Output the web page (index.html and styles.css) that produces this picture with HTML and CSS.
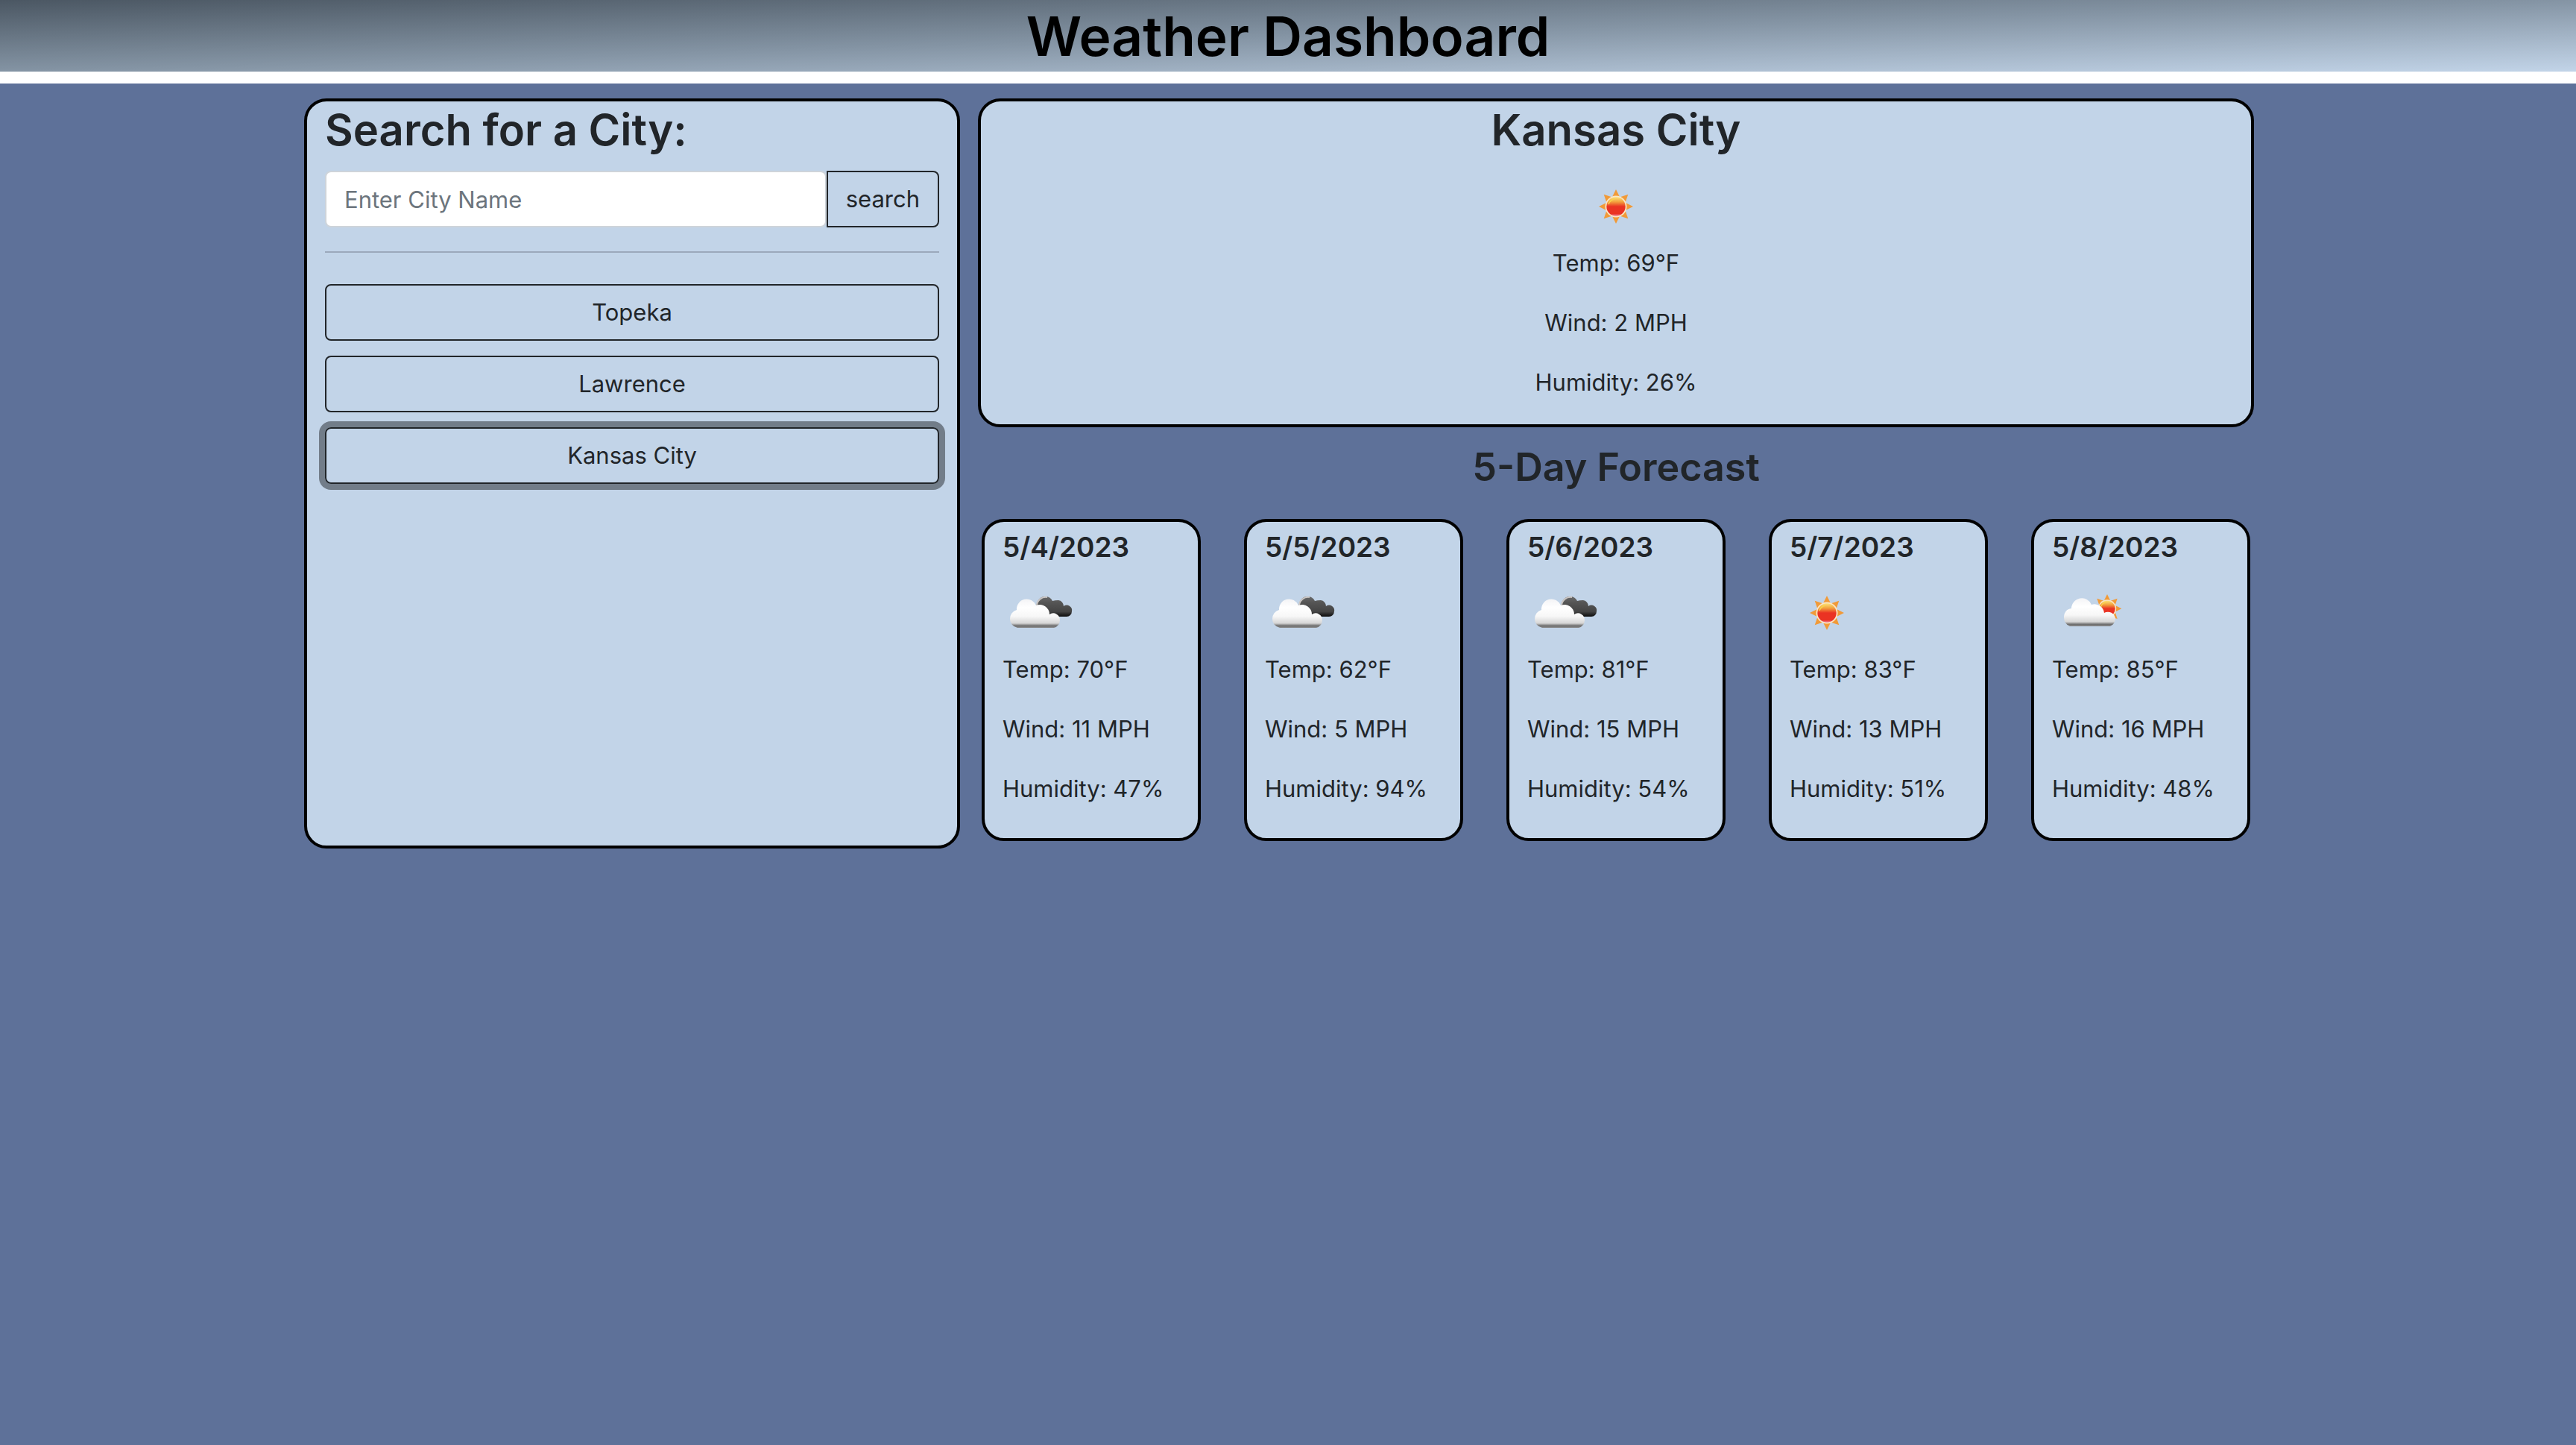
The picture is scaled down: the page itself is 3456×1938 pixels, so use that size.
FILE: index.html
```html
<!DOCTYPE html>
<html lang="en">
<head>
<meta charset="utf-8">
<meta name="viewport" content="width=device-width, initial-scale=1">
<title>Weather Dashboard</title>
<link rel="stylesheet" href="styles.css">
</head>
<body>
<svg class="defs" aria-hidden="true">
  <defs>
    <linearGradient id="disc" x1="0" y1="0" x2="0" y2="1">
      <stop offset="0" stop-color="#fbe27a"/>
      <stop offset=".25" stop-color="#f3a23e"/>
      <stop offset=".5" stop-color="#ea3323"/>
      <stop offset=".88" stop-color="#ea3323"/>
      <stop offset="1" stop-color="#f0809a"/>
    </linearGradient>
    <linearGradient id="white-cloud" x1="0" y1="0" x2="0" y2="1">
      <stop offset="0" stop-color="#f4f4f6"/>
      <stop offset=".3" stop-color="#ffffff"/>
      <stop offset=".6" stop-color="#f7f7f7"/>
      <stop offset=".84" stop-color="#d6d6d6"/>
      <stop offset=".93" stop-color="#6e6e6e"/>
      <stop offset="1" stop-color="#8b8b8b"/>
    </linearGradient>
    <linearGradient id="dark-cloud" x1="0" y1="0" x2="0" y2="1">
      <stop offset="0" stop-color="#6a6a6a"/>
      <stop offset=".3" stop-color="#555555"/>
      <stop offset=".75" stop-color="#444444"/>
      <stop offset="1" stop-color="#0c0c0c"/>
    </linearGradient>
    <symbol id="sun" viewBox="-50 -48 100 100">
      <g fill="#f19a38">
        <path id="ray" d="M0-23L5-13H-5Z"/>
        <use href="#ray" transform="rotate(45)"/>
        <use href="#ray" transform="rotate(90)"/>
        <use href="#ray" transform="rotate(135)"/>
        <use href="#ray" transform="rotate(180)"/>
        <use href="#ray" transform="rotate(225)"/>
        <use href="#ray" transform="rotate(270)"/>
        <use href="#ray" transform="rotate(315)"/>
      </g>
      <circle r="14.5" fill="#fbe6c4"/>
      <circle r="12.7" fill="url(#disc)"/>
      <path d="M-10-3A10.5 10.5 0 0 1-2-10" fill="none" stroke="#f9d34a" stroke-width="1.5"/>
    </symbol>
    <symbol id="broken-clouds" viewBox="0 0 100 100">
      <path fill="url(#dark-cloud)" d="M52 53C46 50 43 42 47 33A11 11 0 0 1 67 32Q70 31 75 31A8 8 0 0 1 82 39A7 7 0 0 1 93 46A7 7 0 0 1 86 53Z"/>
      <path d="M46 38A12 12 0 0 1 60 27" fill="none" stroke="#c8c4c2" stroke-width="2"/>
      <path fill="url(#white-cloud)" d="M20 68A12 12 0 0 1 10 56A12 12 0 0 1 19 44A13.5 13.5 0 0 1 45 38A13 13 0 0 1 63 50A9 9 0 0 1 77 58A11 11 0 0 1 69 68Z"/>
    </symbol>
    <symbol id="few-clouds" viewBox="0 0 100 100">
      <use href="#sun" x="32" y="2" width="84" height="84"/>
      <path fill="url(#white-cloud)" d="M24 66A13 13 0 0 1 16 54A11 11 0 0 1 26 42A14 14 0 0 1 53 37A13 13 0 0 1 70 48A10 10 0 0 1 85 56A12 12 0 0 1 78 66Z"/>
    </symbol>
  </defs>
</svg>

<header class="banner">
  <h1 class="banner-title">Weather Dashboard</h1>
</header>

<main class="page">
  <div class="container">
    <aside class="panel search-panel">
      <h2 class="heading"><label for="city">Search for a City:</label></h2>
      <form class="search-form">
        <input class="search-input" id="city" type="text" placeholder="Enter City Name">
        <button class="btn search-btn" type="submit">search</button>
      </form>
      <hr class="divider">
      <div class="history">
        <button class="btn" type="button">Topeka</button>
        <button class="btn" type="button">Lawrence</button>
        <button class="btn btn-active" type="button">Kansas City</button>
      </div>
    </aside>

    <div class="results">
      <section class="panel current">
        <h2 class="heading">Kansas City</h2>
        <svg class="icon" role="img" aria-label="Clear sky"><use href="#sun"/></svg>
        <p class="reading">Temp: 69°F</p>
        <p class="reading">Wind: 2 MPH</p>
        <p class="reading">Humidity: 26%</p>
      </section>

      <h3 class="forecast-title">5-Day Forecast</h3>
      <section class="forecast">
        <article class="panel day">
          <h4 class="date">5/4/2023</h4>
          <svg class="icon" role="img" aria-label="Broken clouds"><use href="#broken-clouds"/></svg>
          <p class="reading">Temp: 70°F</p>
          <p class="reading">Wind: 11 MPH</p>
          <p class="reading">Humidity: 47%</p>
        </article>
        <article class="panel day">
          <h4 class="date">5/5/2023</h4>
          <svg class="icon" role="img" aria-label="Broken clouds"><use href="#broken-clouds"/></svg>
          <p class="reading">Temp: 62°F</p>
          <p class="reading">Wind: 5 MPH</p>
          <p class="reading">Humidity: 94%</p>
        </article>
        <article class="panel day">
          <h4 class="date">5/6/2023</h4>
          <svg class="icon" role="img" aria-label="Broken clouds"><use href="#broken-clouds"/></svg>
          <p class="reading">Temp: 81°F</p>
          <p class="reading">Wind: 15 MPH</p>
          <p class="reading">Humidity: 54%</p>
        </article>
        <article class="panel day">
          <h4 class="date">5/7/2023</h4>
          <svg class="icon" role="img" aria-label="Clear sky"><use href="#sun"/></svg>
          <p class="reading">Temp: 83°F</p>
          <p class="reading">Wind: 13 MPH</p>
          <p class="reading">Humidity: 51%</p>
        </article>
        <article class="panel day">
          <h4 class="date">5/8/2023</h4>
          <svg class="icon" role="img" aria-label="Few clouds"><use href="#few-clouds"/></svg>
          <p class="reading">Temp: 85°F</p>
          <p class="reading">Wind: 16 MPH</p>
          <p class="reading">Humidity: 48%</p>
        </article>
      </section>
    </div>
  </div>
</main>
</body>
</html>
```
FILE: styles.css
```css
*,
*::before,
*::after {
  box-sizing: border-box;
}

body {
  display: flex;
  flex-direction: column;
  min-height: 100vh;
  margin: 0;
  background: #ffffff;
  color: #212529;
  font-family: Inter, "Liberation Sans", sans-serif;
  font-size: 31px;
  line-height: 48px;
}

h1,
h2,
h3,
h4,
p {
  margin: 0;
  font-weight: 600;
}

.defs {
  position: absolute;
  width: 0;
  height: 0;
}

.banner {
  margin-bottom: 16px;
  background: linear-gradient(to bottom right, #4b5763, #8494a4 50%, #c2d4e8);
  text-align: center;
}

.banner-title {
  padding-top: 2px;
  color: #000000;
  font-size: 73px;
  line-height: 94px;
}

.page {
  flex: 1;
  padding: 20px 24px;
  background: #5e7199;
}

.container {
  display: grid;
  grid-template-columns: minmax(0, 880fr) minmax(0, 1712fr);
  gap: 24px;
  max-width: 2640px;
  margin: 0 auto;
  padding-right: 24px;
}

.panel {
  border: 4px solid #000000;
  border-radius: 30px;
  background: #c2d4e8;
}

.search-panel {
  padding: 0 24px;
}

.heading {
  margin-bottom: 16px;
  font-size: 58px;
  line-height: 77px;
}

.search-form {
  display: flex;
}

.search-input {
  flex: 1;
  min-width: 0;
  height: 76px;
  padding: 12px 24px;
  border: 2px solid #ced4da;
  border-radius: 8px;
  background: #ffffff;
  color: #212529;
  font: inherit;
}

.search-input::placeholder {
  color: #6c757d;
  opacity: 1;
}

.btn {
  padding: 12px 24px;
  border: 2px solid #212529;
  border-radius: 8px;
  background: transparent;
  color: #212529;
  font: inherit;
  cursor: pointer;
}

.search-btn {
  border-radius: 0 8px 8px 0;
}

.divider {
  height: 2px;
  margin: 32px 0 42px;
  border: 0;
  background: #9ba9bb;
}

.history {
  display: grid;
  gap: 20px;
}

.btn-active {
  box-shadow: 0 0 0 8px #727d89;
}

.icon {
  display: block;
  width: 100px;
  height: 100px;
}

.reading {
  margin-bottom: 32px;
  font-weight: 400;
}

.current {
  text-align: center;
}

.current .icon {
  margin: 0 auto;
}

.forecast-title {
  margin: 20px 0 36px;
  font-size: 52px;
  line-height: 67px;
  text-align: center;
}

.forecast {
  display: grid;
  grid-template-columns: repeat(5, minmax(0, 1fr));
  gap: 58px;
  padding: 0 5px 10px;
}

.day {
  padding: 10px 24px;
}

.date {
  margin-bottom: 16px;
  font-size: 37px;
  line-height: 48px;
}
```
